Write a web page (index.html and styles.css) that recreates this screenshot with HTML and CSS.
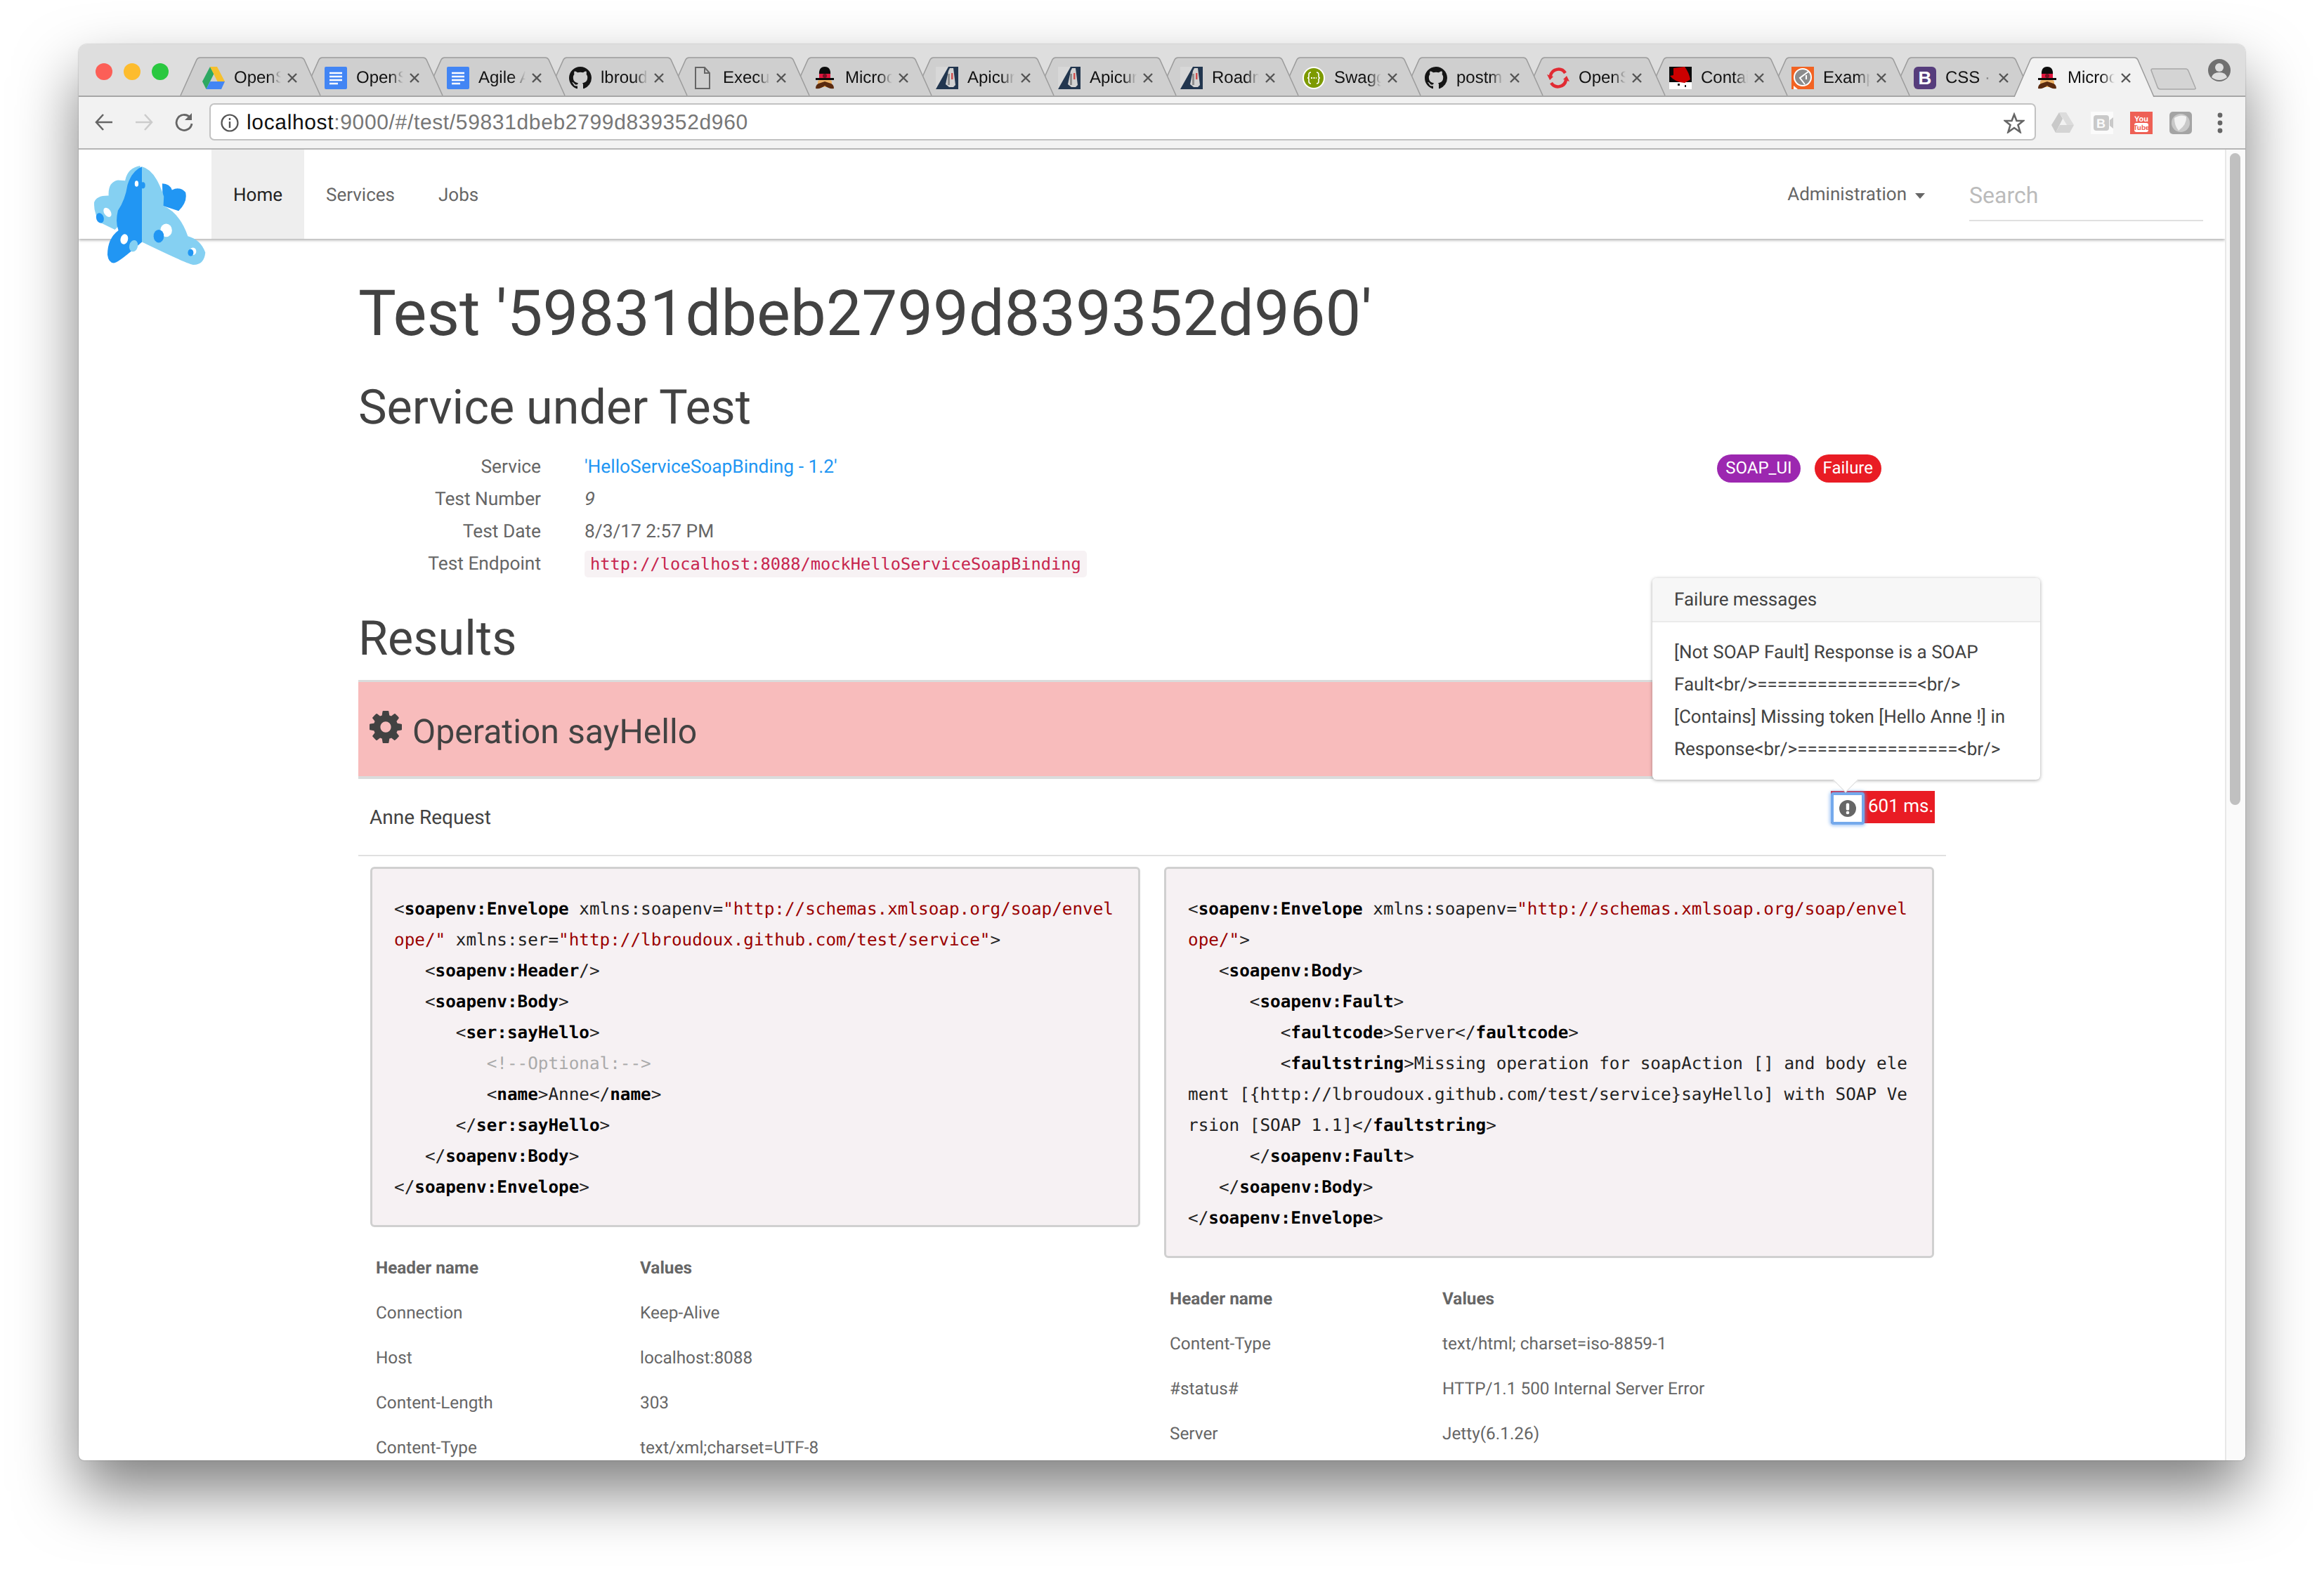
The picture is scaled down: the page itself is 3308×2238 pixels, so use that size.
FILE: index.html
```html
<!DOCTYPE html>
<html lang="en">
<head>
<meta charset="utf-8">
<title>Microcks</title>
<link rel="stylesheet" href="styles.css">
</head>
<body>
<svg class="defs" width="0" height="0" aria-hidden="true">
  <symbol id="tabshape" viewBox="0 0 201 56" preserveAspectRatio="none">
    <path d="M1 56 L24 4 Q25.500 1 29 1 L172 1 Q175.500 1 177 4 L200 56"/>
  </symbol>
  <symbol id="x" viewBox="0 0 16 16"><path d="M2 2 L14 14 M14 2 L2 14" fill="none" stroke="#555" stroke-width="2.400"/></symbol>
  <symbol id="drive" viewBox="0 0 32 32">
    <path fill="#2da862" d="M11 0 L16.500 10 L5.500 32 L0 21Z"/>
    <path fill="#f6c02c" d="M11 0 H21 L32 21 H21.500Z"/>
    <path fill="#4285f4" d="M5.500 32 H27 L32 21 H11Z"/>
  </symbol>
  <symbol id="docs" viewBox="0 0 32 32">
    <rect width="32" height="32" rx="2" fill="#4285f4"/>
    <path d="M7 9 H25 M7 14 H25 M7 19 H25 M7 24 H19" stroke="#fff" stroke-width="2.400"/>
  </symbol>
  <symbol id="gh" viewBox="0 0 16 16">
    <path fill="#151515" d="M8 0C3.580 0 0 3.580 0 8c0 3.540 2.290 6.530 5.470 7.590.4.070.550-.170.550-.380 0-.190-.010-.820-.010-1.490-2.010.370-2.530-.490-2.690-.940-.090-.230-.480-.940-.820-1.130-.280-.150-.680-.520-.010-.530.630-.010 1.080.580 1.230.820.720 1.210 1.870.870 2.330.660.070-.520.280-.870.510-1.070-1.780-.2-3.640-.890-3.640-3.950 0-.870.310-1.590.820-2.150-.080-.2-.360-1.020.080-2.120 0 0 .670-.210 2.200.820.640-.180 1.320-.270 2-.270.680 0 1.360.090 2 .270 1.530-1.040 2.200-.820 2.200-.820.440 1.100.160 1.920.080 2.120.510.560.820 1.270.820 2.150 0 3.070-1.870 3.750-3.650 3.950.290.250.540.730.540 1.480 0 1.070-.010 1.930-.010 2.200 0 .210.150.460.550.380A8.013 8.013 0 0016 8c0-4.420-3.580-8-8-8z"/>
  </symbol>
  <symbol id="file" viewBox="0 0 32 32">
    <path d="M6 1 H19 L26 9 V31 H6Z M19 1 V9 H26" fill="none" stroke="#666" stroke-width="2"/>
  </symbol>
  <symbol id="guy" viewBox="0 0 32 32">
    <path fill="#0b0b0b" d="M8 12 Q7 0 16 0 Q25 0 24 12Z"/>
    <rect x="8" y="10" width="16" height="7" fill="#e0173f"/>
    <circle cx="16" cy="13" r="3" fill="#7a0f24"/>
    <rect x="3" y="16" width="26" height="3" fill="#0b0b0b"/>
    <rect x="6" y="19" width="20" height="10" rx="3" fill="#edb266"/>
    <path fill="#5a2a0f" d="M3 31 Q3 24 10 23 L16 21 L22 23 Q29 24 29 31 Q22 32 16 27 Q10 32 3 31Z"/>
  </symbol>
  <symbol id="apicu" viewBox="0 0 32 32">
    <rect width="32" height="32" fill="#d8d8d8"/>
    <path fill="#22364f" d="M18 0 H32 V32 H0 Z"/>
    <path fill="#d2d2d2" d="M18 6 L20 2 H25 L28 26 L25 29 H19 L14 25Z"/>
    <rect x="22" y="9" width="2.500" height="9" fill="#d05050"/>
    <path fill="#8f8f8f" d="M17 10 H20 V26 H17Z"/>
  </symbol>
  <symbol id="swagger" viewBox="0 0 32 32">
    <circle cx="16" cy="16" r="16" fill="#fff"/>
    <circle cx="16" cy="16" r="14" fill="#7d9a00"/>
    <path d="M12 8 Q9 8 9 11 V14 Q9 16 7 16 Q9 16 9 18 V21 Q9 24 12 24 M20 8 Q23 8 23 11 V14 Q23 16 25 16 Q23 16 23 18 V21 Q23 24 20 24" fill="none" stroke="#fff" stroke-width="1.600"/>
    <path d="M12 16 H20" stroke="#fff" stroke-width="2" stroke-dasharray="2 1.500"/>
  </symbol>
  <symbol id="oshift" viewBox="0 0 32 32">
    <path d="M5 13 A11.500 11.500 0 0 1 26 9 M27 19 A11.500 11.500 0 0 1 6 23" fill="none" stroke="#e12b33" stroke-width="4.500"/>
    <path d="M0 11 L9 14 L4 19Z M32 21 L23 18 L28 13Z" fill="#e12b33"/>
  </symbol>
  <symbol id="redhat" viewBox="0 0 32 32">
    <rect width="32" height="32" fill="#0a0a0a"/>
    <rect y="22" width="32" height="10" fill="#fff"/>
    <path fill="#cc0000" d="M6 2 L22 0 Q28 8 30 18 L22 23 Q8 22 1 13 L6 12Z"/>
    <rect x="12" y="24" width="3" height="3" fill="#222"/><rect x="22" y="26" width="2" height="3" fill="#222"/>
  </symbol>
  <symbol id="exam" viewBox="0 0 32 32">
    <rect width="32" height="32" fill="#f26322"/>
    <circle cx="16" cy="15" r="12" fill="#8c8c8c" stroke="#fff" stroke-width="2"/>
    <path d="M24 7 L12 16 L19 25" fill="none" stroke="#fff" stroke-width="2"/>
    <rect x="20" y="12" width="2" height="6" fill="#fff"/>
    <path d="M3 32 V27 L9 32Z" fill="#fff"/>
  </symbol>
  <symbol id="boot" viewBox="0 0 32 32">
    <rect width="32" height="32" rx="6" fill="#563d7c"/>
    <text x="16" y="25" text-anchor="middle" font-family="Liberation Sans" font-weight="700" font-size="26" fill="#fff">B</text>
  </symbol>
</svg>

<div class="window">
  <header class="tabstrip">
    <div class="lights"><i class="light red"></i><i class="light amber"></i><i class="light green"></i></div>
    <div class="tabs">
      <div class="tab"><svg class="shape"><use href="#tabshape"/></svg><svg class="fav"><use href="#drive"/></svg><span class="title">OpenS</span><svg class="close"><use href="#x"/></svg></div>
      <div class="tab"><svg class="shape"><use href="#tabshape"/></svg><svg class="fav"><use href="#docs"/></svg><span class="title">OpenS</span><svg class="close"><use href="#x"/></svg></div>
      <div class="tab"><svg class="shape"><use href="#tabshape"/></svg><svg class="fav"><use href="#docs"/></svg><span class="title">Agile A</span><svg class="close"><use href="#x"/></svg></div>
      <div class="tab"><svg class="shape"><use href="#tabshape"/></svg><svg class="fav"><use href="#gh"/></svg><span class="title">lbroudoux</span><svg class="close"><use href="#x"/></svg></div>
      <div class="tab"><svg class="shape"><use href="#tabshape"/></svg><svg class="fav"><use href="#file"/></svg><span class="title">Execu</span><svg class="close"><use href="#x"/></svg></div>
      <div class="tab"><svg class="shape"><use href="#tabshape"/></svg><svg class="fav"><use href="#guy"/></svg><span class="title">Microcks</span><svg class="close"><use href="#x"/></svg></div>
      <div class="tab"><svg class="shape"><use href="#tabshape"/></svg><svg class="fav"><use href="#apicu"/></svg><span class="title">Apicurio</span><svg class="close"><use href="#x"/></svg></div>
      <div class="tab"><svg class="shape"><use href="#tabshape"/></svg><svg class="fav"><use href="#apicu"/></svg><span class="title">Apicurio</span><svg class="close"><use href="#x"/></svg></div>
      <div class="tab"><svg class="shape"><use href="#tabshape"/></svg><svg class="fav"><use href="#apicu"/></svg><span class="title">Roadmap</span><svg class="close"><use href="#x"/></svg></div>
      <div class="tab"><svg class="shape"><use href="#tabshape"/></svg><svg class="fav"><use href="#swagger"/></svg><span class="title">Swagger</span><svg class="close"><use href="#x"/></svg></div>
      <div class="tab"><svg class="shape"><use href="#tabshape"/></svg><svg class="fav"><use href="#gh"/></svg><span class="title">postman</span><svg class="close"><use href="#x"/></svg></div>
      <div class="tab"><svg class="shape"><use href="#tabshape"/></svg><svg class="fav"><use href="#oshift"/></svg><span class="title">OpenShift</span><svg class="close"><use href="#x"/></svg></div>
      <div class="tab"><svg class="shape"><use href="#tabshape"/></svg><svg class="fav"><use href="#redhat"/></svg><span class="title">Contai</span><svg class="close"><use href="#x"/></svg></div>
      <div class="tab"><svg class="shape"><use href="#tabshape"/></svg><svg class="fav"><use href="#exam"/></svg><span class="title">Example</span><svg class="close"><use href="#x"/></svg></div>
      <div class="tab"><svg class="shape"><use href="#tabshape"/></svg><svg class="fav"><use href="#boot"/></svg><span class="title">CSS ·</span><svg class="close"><use href="#x"/></svg></div>
      <div class="tab active"><svg class="shape"><use href="#tabshape"/></svg><svg class="fav"><use href="#guy"/></svg><span class="title">Microcks</span><svg class="close"><use href="#x"/></svg></div>
    </div>
    <svg class="newtab" viewBox="0 0 65 31"><path d="M3 1 H50 Q53 1 54 4 L64 28 Q65 30 62 30 H14 Q11 30 10 27 L1 3 Q1 1 3 1Z"/></svg>
    <svg class="profile" viewBox="0 0 32 32"><circle cx="16" cy="16" r="16" fill="#707070"/><circle cx="16" cy="12" r="6" fill="#dedede"/><path d="M5 26 Q7 19 16 19 Q25 19 27 26 Q22 30 16 30 Q10 30 5 26Z" fill="#dedede"/></svg>
  </header>

  <div class="toolbar">
    <div class="navbtns">
      <svg class="navbtn" viewBox="0 0 28 28"><path d="M26 14 H3 M13 3 L3 14 L13 25" fill="none" stroke="#666" stroke-width="2.600"/></svg>
      <svg class="navbtn" viewBox="0 0 28 28"><path d="M2 14 H25 M15 3 L25 14 L15 25" fill="none" stroke="#ccc" stroke-width="2.600"/></svg>
      <svg class="navbtn" viewBox="0 0 28 28"><path d="M23 8 A11 11 0 1 0 25 16" fill="none" stroke="#666" stroke-width="2.800"/><path d="M25 1 V11 H15Z" fill="#666"/></svg>
    </div>
    <div class="omnibox">
      <svg class="info" viewBox="0 0 26 26"><circle cx="13" cy="13" r="11.500" fill="none" stroke="#555" stroke-width="2.200"/><path d="M13 11 V20 M13 6 V9" stroke="#555" stroke-width="2.400"/></svg>
      <span class="url"><span class="host">localhost</span>:9000/#/test/59831dbeb2799d839352d960</span>
      <svg class="star" viewBox="0 0 30 30"><path d="M15 3 L18.500 12 H28 L20.500 18 L23.500 28 L15 22 L6.500 28 L9.500 18 L2 12 H11.500Z" fill="none" stroke="#666" stroke-width="2.600"/></svg>
    </div>
    <div class="exts">
      <svg class="ext" viewBox="0 0 32 32"><path fill="#c9c9c9" d="M11 1 L16 10 L6 30 L0 19Z"/><path fill="#dcdcdc" d="M11 1 H21 L32 19 H22Z"/><path fill="#d4d4d4" d="M6 30 H26 L32 19 H12Z"/></svg>
      <svg class="ext" viewBox="0 0 32 32"><rect width="32" height="32" fill="#fbfbfb"/><rect x="4" y="5" width="22" height="22" rx="4" fill="#c9c9c9"/><text x="14.500" y="23" text-anchor="middle" font-family="Liberation Sans" font-weight="700" font-size="18" fill="#fbfbfb">B</text><path d="M27 12 L32 8 V24 L27 20Z" fill="#c9c9c9"/></svg>
      <svg class="ext" viewBox="0 0 32 32"><rect width="32" height="32" fill="#ee6055"/><text x="16" y="14" text-anchor="middle" font-family="Liberation Sans" font-weight="700" font-size="11" fill="#fff">You</text><rect x="6" y="16" width="20" height="13" rx="3" fill="#fff"/><text x="16" y="26" text-anchor="middle" font-family="Liberation Sans" font-weight="700" font-size="10" fill="#ee6055">Tube</text></svg>
      <svg class="ext" viewBox="0 0 32 32"><rect width="32" height="32" rx="5" fill="#a4a4a4"/><circle cx="16" cy="16" r="13" fill="#c9c9c9"/><path d="M7 9 Q16 3 24 7 Q25 18 13 27 Q7 20 7 9Z" fill="#f2f2f2"/></svg>
      <svg class="menu" viewBox="0 0 8 32"><circle cx="4" cy="5" r="3.400"/><circle cx="4" cy="16" r="3.400"/><circle cx="4" cy="27" r="3.400"/></svg>
    </div>
  </div>

  <div class="viewport">
    <div class="page">
      <nav class="navbar">
        <ul class="navlinks">
          <li class="navlink current">Home</li>
          <li class="navlink">Services</li>
          <li class="navlink">Jobs</li>
        </ul>
        <div class="navright">
          <span class="admin">Administration<i class="caret"></i></span>
          <span class="search">Search</span>
        </div>
        <svg class="logo" viewBox="100 108 482 425">
          <path fill="#2196f3" d="M395 184 Q428 185 437 212 Q470 195 495 222 Q505 262 465 302 L398 280Z"/>
          <path fill="#85d0f2" d="M192 382 L130 352 Q100 312 103 265 Q112 235 165 236 Q162 178 205 170 L236 172 Q245 118 300 108 L320 250Z"/>
          <path fill="#2196f3" d="M308 112 Q265 130 246 190 Q236 255 205 300 Q193 350 207 385 Q160 420 160 490 Q165 527 190 525 Q212 520 308 435Z"/>
          <path fill="#85d0f2" d="M308 112 Q365 125 402 240 L400 280 Q470 310 505 410 Q560 425 580 480 Q575 532 530 533 Q510 533 308 435Z"/>
          <ellipse cx="160" cy="308" rx="14" ry="22" transform="rotate(-35 160 308)" fill="#fff"/>
          <ellipse cx="128" cy="332" rx="16" ry="22" transform="rotate(-20 128 332)" fill="#2196f3"/>
          <ellipse cx="232" cy="423" rx="16" ry="22" transform="rotate(15 232 423)" fill="#fff"/>
          <ellipse cx="272" cy="452" rx="18" ry="25" transform="rotate(15 272 452)" fill="#85d0f2"/>
          <ellipse cx="285" cy="185" rx="8" ry="13" fill="#fff"/>
          <ellipse cx="312" cy="192" rx="10" ry="14" fill="#2196f3"/>
          <ellipse cx="412" cy="385" rx="25" ry="28" fill="#fff"/>
          <ellipse cx="380" cy="410" rx="22" ry="28" fill="#2196f3"/>
          <ellipse cx="527" cy="475" rx="14" ry="16" fill="#fff"/>
          <ellipse cx="517" cy="481" rx="12" ry="15" fill="#2196f3"/>
        </svg>
      </nav>

      <main class="container">
        <h1 class="title-main">Test '59831dbeb2799d839352d960'</h1>
        <h2 class="title-sub">Service under Test</h2>
        <section class="summary">
          <dl class="meta">
            <dt>Service</dt><dd><a class="link">'HelloServiceSoapBinding - 1.2'</a></dd>
            <dt>Test Number</dt><dd><em class="num">9</em></dd>
            <dt>Test Date</dt><dd>8/3/17 2:57 PM</dd>
            <dt>Test Endpoint</dt><dd><code class="chip">http://localhost:8088/mockHelloServiceSoapBinding</code></dd>
          </dl>
          <div class="badges"><span class="badge purple">SOAP_UI</span><span class="badge danger">Failure</span></div>
        </section>
        <h2 class="title-sub results">Results</h2>
        <div class="opbar">
          <svg class="gear" viewBox="128 128 1536 1536"><path d="M1152 896q0-106-75-181t-181-75-181 75-75 181 75 181 181 75 181-75 75-181zm512-109v222q0 12-8 23t-20 13l-185 28q-19 54-39 91 35 50 107 138 10 12 10 25t-9 23q-27 37-99 108t-94 71q-12 0-26-9l-138-108q-44 23-91 38-16 136-29 186-7 28-36 28h-222q-14 0-24.500-8.500t-11.500-21.500l-28-184q-49-16-90-37l-141 107q-10 9-25 9-14 0-25-11-126-114-165-168-7-10-7-23 0-12 8-23 15-21 51-66.500t54-70.500q-27-50-41-99l-183-27q-13-2-21-12.500t-8-23.500v-222q0-12 8-23t19-13l186-28q14-46 39-92-40-57-107-138-10-12-10-24 0-10 9-23 26-36 98.500-107.500t94.500-71.500q13 0 26 10l138 107q44-23 91-38 16-136 29-186 7-28 36-28h222q14 0 24.500 8.500t11.500 21.500l28 184q49 16 90 37l142-107q9-9 24-9 13 0 25 10 129 119 165 170 7 8 7 22 0 12-8 23-15 21-51 66.500t-54 70.500q26 50 41 98l183 28q13 2 21 12.500t8 23.500z"/></svg>
          <span class="opname">Operation sayHello</span>
        </div>
        <div class="reqrow">
          <span class="reqname">Anne Request</span>
          <div class="duration">
            <div class="popover">
              <div class="pop-head">Failure messages</div>
              <div class="pop-body">[Not SOAP Fault] Response is a SOAP<br>Fault&lt;br/&gt;================&lt;br/&gt;<br>[Contains] Missing token [Hello Anne !] in<br>Response&lt;br/&gt;================&lt;br/&gt;</div>
              <i class="pop-arrow"></i>
            </div>
            <span class="alertbtn"><svg viewBox="0 0 24 24"><circle cx="12" cy="12" r="12" fill="#666"/><rect x="9.800" y="4.500" width="4.400" height="10" rx="1.500" fill="#fff"/><circle cx="12" cy="18" r="2.300" fill="#fff"/></svg></span>
            <span class="ms">601 ms.</span>
          </div>
        </div>
        <div class="exchange">
          <div class="col">
<pre class="xml">&lt;<b>soapenv:Envelope</b> xmlns:soapenv=<s>"http://schemas.xmlsoap.org/soap/envelope/"</s> xmlns:ser=<s>"http://lbroudoux.github.com/test/service"</s>&gt;
   &lt;<b>soapenv:Header</b>/&gt;
   &lt;<b>soapenv:Body</b>&gt;
      &lt;<b>ser:sayHello</b>&gt;
         <u>&lt;!--Optional:--&gt;</u>
         &lt;<b>name</b>&gt;Anne&lt;/<b>name</b>&gt;
      &lt;/<b>ser:sayHello</b>&gt;
   &lt;/<b>soapenv:Body</b>&gt;
&lt;/<b>soapenv:Envelope</b>&gt;</pre>
            <table class="headers narrow">
              <thead><tr><th>Header name</th><th>Values</th></tr></thead>
              <tbody>
                <tr><td>Connection</td><td>Keep-Alive</td></tr>
                <tr><td>Host</td><td>localhost:8088</td></tr>
                <tr><td>Content-Length</td><td>303</td></tr>
                <tr><td>Content-Type</td><td>text/xml;charset=UTF-8</td></tr>
              </tbody>
            </table>
          </div>
          <div class="col">
<pre class="xml">&lt;<b>soapenv:Envelope</b> xmlns:soapenv=<s>"http://schemas.xmlsoap.org/soap/envelope/"</s>&gt;
   &lt;<b>soapenv:Body</b>&gt;
      &lt;<b>soapenv:Fault</b>&gt;
         &lt;<b>faultcode</b>&gt;Server&lt;/<b>faultcode</b>&gt;
         &lt;<b>faultstring</b>&gt;Missing operation for soapAction [] and body element [{http://lbroudoux.github.com/test/service}sayHello] with SOAP Version [SOAP 1.1]&lt;/<b>faultstring</b>&gt;
      &lt;/<b>soapenv:Fault</b>&gt;
   &lt;/<b>soapenv:Body</b>&gt;
&lt;/<b>soapenv:Envelope</b>&gt;</pre>
            <table class="headers wide">
              <thead><tr><th>Header name</th><th>Values</th></tr></thead>
              <tbody>
                <tr><td>Content-Type</td><td>text/html; charset=iso-8859-1</td></tr>
                <tr><td>#status#</td><td>HTTP/1.1 500 Internal Server Error</td></tr>
                <tr><td>Server</td><td>Jetty(6.1.26)</td></tr>
              </tbody>
            </table>
          </div>
        </div>
      </main>
    </div>
    <div class="scrollbar"><div class="thumb"></div></div>
  </div>
</div>
</body>
</html>
```

FILE: styles.css
```css
* { box-sizing: border-box; }
html, body { margin: 0; height: 100%; }
body {
  width: 3308px;
  height: 2238px;
  padding: 63px 0 0 112px;
  background: #fff;
  overflow: hidden;
  font-family: Roboto, "Liberation Sans", sans-serif;
  color: #666;
  text-rendering: geometricPrecision;
}
.defs { position: absolute; }

.window {
  width: 3084px;
  height: 2016px;
  display: flex;
  flex-direction: column;
  overflow: hidden;
  border-radius: 12px 12px 8px 8px;
  background: #fff;
  box-shadow: 0 44px 88px rgba(0, 0, 0, .5), 0 0 2px rgba(0, 0, 0, .35);
}

/* tab strip */
.tabstrip {
  height: 75px;
  flex: none;
  display: flex;
  align-items: flex-end;
  background: #dedede;
  border-bottom: 2px solid #a6a6a6;
  position: relative;
}
.lights { display: flex; gap: 16px; align-self: flex-start; padding: 27px 0 0 24px; width: 144px; }
.light { width: 24px; height: 24px; border-radius: 50%; }
.light.red { background: #fc5f57; }
.light.amber { background: #fdbc2e; }
.light.green { background: #2ac840; }
.tabs { display: flex; font-family: "Liberation Sans", sans-serif; }
.tab {
  position: relative;
  width: 201px;
  height: 55px;
  margin-right: -27px;
  padding: 5px 0 0 32px;
  display: flex;
  align-items: center;
}
.tab:nth-child(1) { z-index: 16; }
.tab:nth-child(2) { z-index: 15; }
.tab:nth-child(3) { z-index: 14; }
.tab:nth-child(4) { z-index: 13; }
.tab:nth-child(5) { z-index: 12; }
.tab:nth-child(6) { z-index: 11; }
.tab:nth-child(7) { z-index: 10; }
.tab:nth-child(8) { z-index: 9; }
.tab:nth-child(9) { z-index: 8; }
.tab:nth-child(10) { z-index: 7; }
.tab:nth-child(11) { z-index: 6; }
.tab:nth-child(12) { z-index: 5; }
.tab:nth-child(13) { z-index: 4; }
.tab:nth-child(14) { z-index: 3; }
.tab:nth-child(15) { z-index: 2; }
.tab.active { z-index: 20; }
.shape {
  position: absolute;
  left: 0;
  top: 0;
  width: 201px;
  height: 55px;
  fill: #cfcfcf;
  stroke: #9c9c9c;
  stroke-width: 1.500px;
}
.tab.active .shape { height: 57px; fill: #f2f2f2; }
.fav { position: relative; width: 32px; height: 32px; flex: none; }
.title {
  position: relative;
  width: 67px;
  margin-left: 13px;
  overflow: hidden;
  white-space: nowrap;
  font-size: 24px;
  color: #111;
  -webkit-mask-image: linear-gradient(to right, #000 72%, transparent);
  mask-image: linear-gradient(to right, #000 72%, transparent);
}
.close { position: relative; width: 16px; height: 16px; margin-left: 8px; flex: none; }
.newtab {
  width: 65px;
  height: 31px;
  margin: 0 0 8px 21px;
  flex: none;
  fill: #d4d4d4;
  stroke: #a8a8a8;
  stroke-width: 1.500px;
}
.profile { width: 32px; height: 32px; margin: 0 0 20px 17px; flex: none; }

/* toolbar */
.toolbar {
  height: 75px;
  flex: none;
  display: flex;
  align-items: flex-start;
  padding-top: 9px;
  background: #f2f2f2;
  border-bottom: 2px solid #b5b5b5;
}
.navbtns { display: flex; width: 186px; padding: 13px 0 0 22px; gap: 29px; }
.navbtn { width: 28px; height: 28px; flex: none; }
.omnibox {
  width: 2600px;
  height: 53px;
  display: flex;
  align-items: center;
  padding: 0 14px;
  background: #fff;
  border: 2px solid #c2c2c2;
  border-radius: 7px;
  font-family: "Liberation Sans", sans-serif;
}
.info { width: 26px; height: 26px; flex: none; margin-top: 2px; }
.url {
  flex: 1;
  margin-left: 11px;
  padding-top: 3px;
  font-size: 30px;
  letter-spacing: .65px;
  color: #777;
  white-space: nowrap;
}
.host { color: #111; }
.star { width: 30px; height: 30px; margin: 2px 0 0; flex: none; }
.exts { display: flex; align-items: center; gap: 24px; padding: 12px 0 0 22px; }
.ext { width: 32px; height: 32px; flex: none; }
.menu { width: 8px; height: 32px; margin-left: 12px; fill: #666; flex: none; }

/* page */
.viewport { flex: 1; min-height: 0; display: flex; }
.page { flex: 1; min-width: 0; overflow: hidden; position: relative; }
.scrollbar {
  width: 29px;
  flex: none;
  padding: 5px 7px 0 5px;
  background: #fafafa;
  border-left: 2px solid #e8e8e8;
}
.thumb { height: 928px; border-radius: 8px; background: #c0c0c0; }

.navbar {
  height: 127px;
  display: flex;
  justify-content: space-between;
  padding-left: 189px;
  background: #fff;
  box-shadow: 0 2px 4px rgba(0, 0, 0, .32);
  position: relative;
  z-index: 1;
}
.navlinks { display: flex; margin: 0; padding: 0; list-style: none; }
.navlink {
  display: flex;
  align-items: center;
  padding: 3px 31px 0;
  font-size: 26px;
  color: #666;
}
.navlink.current { background: #eee; color: #222; }
.navright { display: flex; align-items: flex-start; padding-right: 31px; }
.admin { font-size: 26px; margin-top: 45px; line-height: 38px; display: flex; align-items: center; }
.caret {
  width: 0;
  height: 0;
  margin: 4px 0 0 12px;
  border: 7px solid transparent;
  border-top: 8px solid #666;
  border-bottom: 0;
}
.search {
  width: 333px;
  height: 102px;
  margin-left: 63px;
  padding-top: 44px;
  font-size: 32px;
  line-height: 42px;
  color: #bbb;
  border-bottom: 2px solid #e0e0e0;
}
.logo { position: absolute; left: 21px; top: 23px; width: 160px; height: 141px; }

.container { width: 2260px; margin-left: 398px; color: #424242; }
.title-main { margin: 57px 0 0; font-size: 90.300px; line-height: 100px; font-weight: 400; }
.title-sub { margin: 48px 0 0; font-size: 68.300px; line-height: 70px; font-weight: 400; }
.title-sub.results { margin-top: 48px; }
.summary { display: flex; justify-content: space-between; margin-top: 27px; padding-right: 92px; }
.meta {
  margin: 0;
  display: grid;
  grid-template-columns: 260px auto;
  column-gap: 62px;
  grid-auto-rows: 46px;
  font-size: 26.300px;
  line-height: 46px;
  color: #666;
}
.meta dt { text-align: right; }
.meta dd { margin: 0; }
.num { display: inline-block; transform: skewX(-12deg); font-style: normal; }
.link { color: #2196f3; }
.chip {
  padding: 5px 8px;
  background: #f7f2f4;
  border-radius: 5px;
  color: #c7254e;
  font-family: "DejaVu Sans Mono", monospace;
  font-size: 23.700px;
}
.badges { display: flex; gap: 20px; align-self: flex-start; padding-top: 5px; }
.badge {
  height: 40px;
  padding: 0 12px;
  border-radius: 20px;
  font-size: 24px;
  line-height: 38px;
  color: #fff;
}
.badge.purple { background: #9c27b0; }
.badge.danger { background: #e91c24; }

.opbar {
  height: 141px;
  margin-top: 24px;
  display: flex;
  align-items: center;
  gap: 15px;
  padding-left: 16px;
  background: #f8bcbc;
  border-top: 3px solid #dadcdc;
  border-bottom: 4px solid #dadcdc;
  font-size: 48.200px;
}
.opname { padding-top: 6px; }
.gear { width: 46px; height: 46px; fill: #424242; flex: none; margin-top: -6px; }
.reqrow {
  height: 110px;
  display: flex;
  justify-content: space-between;
  align-items: flex-start;
  padding: 17px 16px 0;
  border-bottom: 2px solid #e0e0e0;
}
.reqname { margin-top: 18px; font-size: 28px; line-height: 40px; }
.duration {
  position: relative;
  display: flex;
  width: 148px;
  height: 46px;
  background: #e91c24;
}
.alertbtn {
  width: 48px;
  height: 46px;
  margin: 2px 0 0;
  flex: none;
  display: flex;
  align-items: center;
  justify-content: center;
  background: #fff;
  border: 4px solid #74a9ec;
  border-radius: 4px;
  box-shadow: 0 0 4px 2px rgba(100, 160, 240, .55);
}
.alertbtn svg { width: 24px; height: 24px; }
.ms { margin-left: 5px; font-size: 26px; line-height: 44px; color: #fff; white-space: nowrap; }
.popover {
  position: absolute;
  left: -254px;
  bottom: 62px;
  z-index: 5;
  width: 552px;
  height: 287px;
  background: #fff;
  border-radius: 6px;
  box-shadow: 0 1px 5px rgba(0, 0, 0, .35);
  color: #424242;
  font-size: 26px;
}
.pop-head {
  height: 63px;
  padding-left: 31px;
  line-height: 63px;
  background: #f7f7f7;
  border-bottom: 2px solid #ebebeb;
  border-radius: 6px 6px 0 0;
}
.pop-body { padding: 20px 20px 0 31px; line-height: 46px; white-space: nowrap; }
.pop-arrow {
  position: absolute;
  left: 262px;
  bottom: -13px;
  width: 26px;
  height: 26px;
  transform: rotate(45deg);
  background: #fff;
  border-right: 1px solid #ddd;
  border-bottom: 1px solid #ddd;
}

.exchange {
  display: grid;
  grid-template-columns: 1096px 1096px;
  column-gap: 34px;
  padding: 15px 17px 0;
}
.xml {
  margin: 0;
  padding: 35px 30px 32px 31px;
  background: #f6f1f3;
  border: 3px solid #d0d0d0;
  border-radius: 6px;
  font-family: "DejaVu Sans Mono", monospace;
  font-size: 24.300px;
  line-height: 44px;
  color: #222;
  white-space: pre-wrap;
  word-break: break-all;
}
.xml b { color: #000; font-weight: 700; }
.xml s { color: #9a0000; text-decoration: none; }
.xml u { color: #aaa; text-decoration: none; }
.headers {
  width: 100%;
  margin-top: 25px;
  border-collapse: collapse;
  table-layout: fixed;
  font-size: 24.350px;
  color: #666;
}
.headers th, .headers td { height: 64px; padding: 0 8px; text-align: left; }
.headers th { font-weight: 700; }
.headers.narrow th:first-child { width: 376px; }
.headers.wide th:first-child { width: 388px; }
```
